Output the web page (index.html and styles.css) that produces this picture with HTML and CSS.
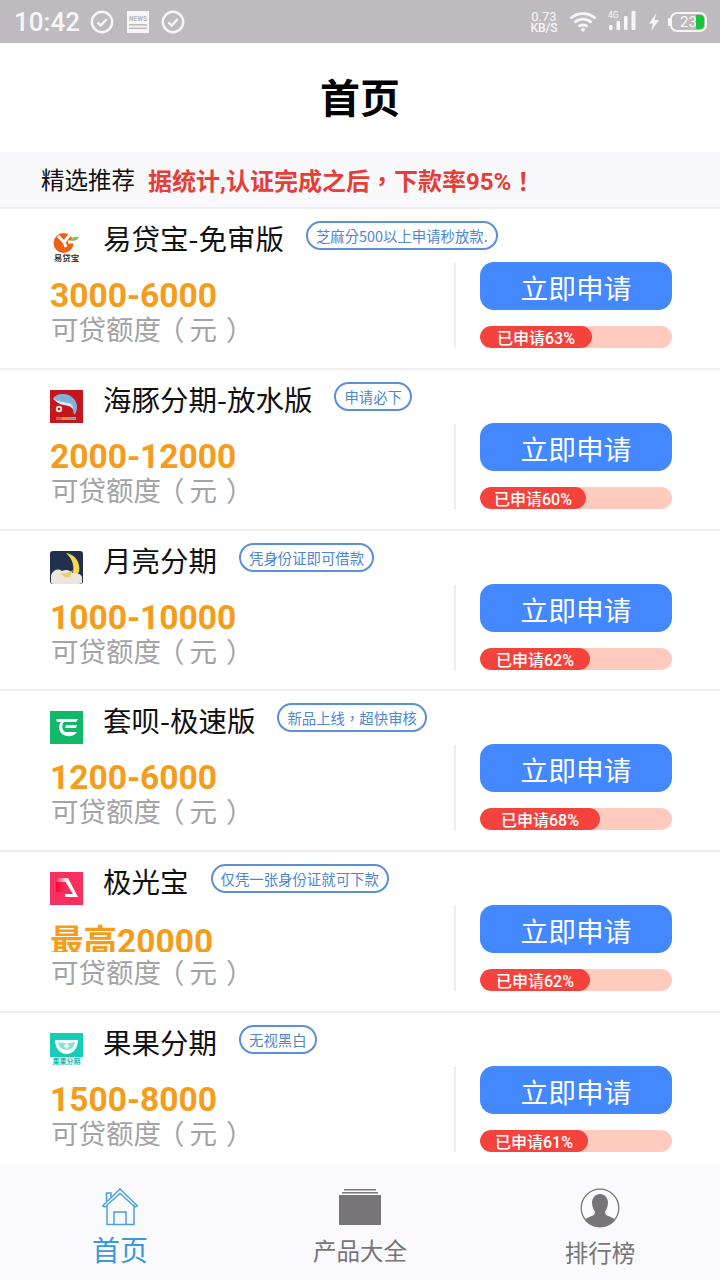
FILE: index.html
```html
<!DOCTYPE html>
<html>
<head>
    <title>首页</title>
    <link rel="stylesheet" href="styles.css">
</head>
<body>
    <div class="phone">
        <div class="statusBar">
            <span class="clock">10:42</span>
            <svg class="sIcon" width="24" height="24" viewBox="0 0 24 24"><circle cx="12" cy="12" r="10.2" fill="none" stroke="#f6f6f6" stroke-width="2.4"/><path d="M7.500 12.300l3.200 3.200 6-6.500" fill="none" stroke="#f6f6f6" stroke-width="2.400"/></svg>
            <svg class="sIcon newsIcon" width="22" height="22" viewBox="0 0 22 22"><rect width="22" height="22" fill="#f6f6f6"/><text x="11" y="9.500" font-size="6.500" font-weight="700" text-anchor="middle" fill="#b5b5b5" font-family="Roboto">NEWS</text><rect x="2" y="13" width="18" height="1.600" fill="#bdbbbe"/><rect x="2" y="16.500" width="18" height="1.600" fill="#bdbbbe"/></svg>
            <svg class="sIcon" width="24" height="24" viewBox="0 0 24 24"><circle cx="12" cy="12" r="10.200" fill="none" stroke="#f6f6f6" stroke-width="2.400"/><path d="M7.500 12.300l3.200 3.200 6-6.500" fill="none" stroke="#f6f6f6" stroke-width="2.400"/></svg>
            <div class="statusRight">
                <div class="speed"><span>0.73</span><span class="speedUnit">KB/S</span></div>
                <svg class="wifi" width="28" height="22" viewBox="0 0 28 22"><path d="M1.500 7.500C8.500 1 19.500 1 26.500 7.500M5.500 11.500C10.500 7 17.500 7 22.500 11.500M9.500 15.500C12 13.500 16 13.500 18.500 15.500" fill="none" stroke="#f6f6f6" stroke-width="2.800"/><path d="M11.500 18.500L14 16.500L16.500 18.500L14 21Z" fill="#f6f6f6"/></svg>
                <svg class="signal" width="28" height="21" viewBox="0 0 28 21"><text x="0" y="7.500" font-size="8.500" fill="#f6f6f6" font-family="Roboto">4G</text><rect x="1" y="15" width="3.500" height="5" rx="1.200" fill="#f6f6f6"/><rect x="8.500" y="11" width="3.500" height="9" rx="1" fill="#f6f6f6"/><rect x="16" y="6" width="3.500" height="14" rx="1" fill="#f6f6f6"/><rect x="23.500" y="1" width="4" height="19" rx="1" fill="#f6f6f6"/></svg>
                <svg class="bolt" width="12" height="18" viewBox="0 0 12 18"><path d="M8.500 0L1 10.500h4L3 18l8-11H6.500z" fill="#f6f6f6"/></svg>
                <div class="battery"><span>23</span><i></i></div>
            </div>
        </div>

        <div class="titleBar">首页</div>

        <div class="banner">
            <span class="bannerLabel">精选推荐</span>
            <span class="bannerNotice">据统计,认证完成之后，下款率95%！</span>
        </div>

        <div class="list">
            <div class="row">
                <div class="rowLeft">
                    <div class="rowHead">
                        <svg class="appIcon" viewBox="0 0 33 33"><circle cx="13.500" cy="14" r="10" fill="#ee5f16"/><path d="M8 7l6 6 2 5M22 3l-7 9M25 13l-7 0" fill="none" stroke="#fff" stroke-width="3"/><path d="M20 11c2-3 6-4 9-3-1 3-5 5-9 3z" fill="#8cbf4a"/><text x="16.500" y="31.500" font-size="8.500" text-anchor="middle" font-family="Noto Sans CJK SC" font-weight="500" fill="#222">易贷宝</text></svg>
                        <span class="name">易贷宝-免审版</span>
                        <span class="tag">芝麻分500以上申请秒放款.</span>
                    </div>
                    <div class="amount">3000-6000</div>
                    <div class="amountLabel">可贷额度<span class="parenOpen">（</span>元<span class="parenClose">）</span></div>
                </div>
                <div class="rowRight">
                    <div class="applyBtn">立即申请</div>
                    <div class="progress"><div class="progressFill" style="width: 112px">已申请63%</div></div>
                </div>
            </div>

            <div class="row">
                <div class="rowLeft">
                    <div class="rowHead">
                        <svg class="appIcon" viewBox="0 0 33 33"><rect width="33" height="33" fill="#c5161d"/><path d="M3 9c1-3 5-5 10-5 8 0 14 6 14 13 0 3-1 6-3 8l-1-5c-1-4-3-6-6-7-5 0-10 0-14-4z" fill="#7fb2dc"/><path d="M4 9c5 3 10 3 15 4 3 1 4 3 4 6-3-3-6-4-10-4-4-1-7-3-9-6z" fill="#dbe9f3"/><circle cx="9" cy="19" r="3.200" fill="#f3e6d8"/><circle cx="9" cy="19" r="1.300" fill="#c5161d"/><rect x="6" y="27" width="6" height="3" fill="#c9577a"/><rect x="12" y="27" width="7" height="3" fill="#d99a3c"/><rect x="19" y="27" width="7" height="3" fill="#7aa6c8"/></svg>
                        <span class="name">海豚分期-放水版</span>
                        <span class="tag">申请必下</span>
                    </div>
                    <div class="amount">2000-12000</div>
                    <div class="amountLabel">可贷额度<span class="parenOpen">（</span>元<span class="parenClose">）</span></div>
                </div>
                <div class="rowRight">
                    <div class="applyBtn">立即申请</div>
                    <div class="progress"><div class="progressFill" style="width: 106px">已申请60%</div></div>
                </div>
            </div>

            <div class="row">
                <div class="rowLeft">
                    <div class="rowHead">
                        <svg class="appIcon" viewBox="0 0 33 33"><rect width="33" height="33" rx="3" fill="#22304f"/><path d="M16 2c9 1 15 10 13 19-1 2-3 3-7 3 3-7 1-16-6-22z" fill="#f6d64f"/><path d="M1 24c2-5 7-7 11-4 4-2 8-1 10 2 4-1 9 1 10 4v5c0 1-1 2-3 2H4c-2 0-3-1-3-2z" fill="#ece7dc"/><path d="M10 22c5 1 9 0 13-3l-3 7c-3 1-7 0-10-4z" fill="#e9cf6a"/></svg>
                        <span class="name">月亮分期</span>
                        <span class="tag">凭身份证即可借款</span>
                    </div>
                    <div class="amount">1000-10000</div>
                    <div class="amountLabel">可贷额度<span class="parenOpen">（</span>元<span class="parenClose">）</span></div>
                </div>
                <div class="rowRight">
                    <div class="applyBtn">立即申请</div>
                    <div class="progress"><div class="progressFill" style="width: 110px">已申请62%</div></div>
                </div>
            </div>

            <div class="row">
                <div class="rowLeft">
                    <div class="rowHead">
                        <svg class="appIcon" viewBox="0 0 33 33"><rect width="33" height="33" fill="#10b868"/><path d="M6 8h22l-2 3H14c-3 3-2 9 2 10h11c-2 3-6 5-10 4C9 24 7 15 11 11H7z" fill="#fff"/><path d="M16 14h11l-1 3H15z" fill="#fff"/></svg>
                        <span class="name">套呗-极速版</span>
                        <span class="tag">新品上线，超快审核</span>
                    </div>
                    <div class="amount">1200-6000</div>
                    <div class="amountLabel">可贷额度<span class="parenOpen">（</span>元<span class="parenClose">）</span></div>
                </div>
                <div class="rowRight">
                    <div class="applyBtn">立即申请</div>
                    <div class="progress"><div class="progressFill" style="width: 120px">已申请68%</div></div>
                </div>
            </div>

            <div class="row">
                <div class="rowLeft">
                    <div class="rowHead">
                        <svg class="appIcon" viewBox="0 0 33 33"><defs><linearGradient id="pinkBar" x1="0" y1="0" x2="1" y2="0"><stop offset="0" stop-color="#f7305f"/><stop offset="1" stop-color="#fff"/></linearGradient><linearGradient id="redBlock" x1="0" y1="0" x2="1" y2="0"><stop offset="0" stop-color="#ee0a30"/><stop offset="1" stop-color="#f7305f"/></linearGradient></defs><rect width="33" height="33" fill="#f7305f"/><rect x="6" y="10" width="10" height="10" fill="url(#redBlock)"/><rect x="6" y="6" width="12" height="4" fill="url(#pinkBar)"/><path d="M18 6l10 19H15v-3h8L15.500 10z" fill="#fff"/></svg>
                        <span class="name">极光宝</span>
                        <span class="tag">仅凭一张身份证就可下款</span>
                    </div>
                    <div class="amount amountClipped">最高20000</div>
                    <div class="amountLabel">可贷额度<span class="parenOpen">（</span>元<span class="parenClose">）</span></div>
                </div>
                <div class="rowRight">
                    <div class="applyBtn">立即申请</div>
                    <div class="progress"><div class="progressFill" style="width: 110px">已申请62%</div></div>
                </div>
            </div>

            <div class="row">
                <div class="rowLeft">
                    <div class="rowHead">
                        <svg class="appIcon" viewBox="0 0 33 33"><rect width="33" height="24" fill="#18cdb8"/><path d="M5 7c0 8 5 14 11.500 14S28 15 28 7" fill="#fff"/><path d="M8 9c5 1.500 12 1.500 17 0-1 5-4 8-8.500 8S9 14 8 9z" fill="#7fe6da"/><path d="M15.500 10.500h2v1.500h1.500v2h-1.500v1.500h-2V14H14v-2h1.500z" fill="#fff"/><text x="16.500" y="31" font-size="7" font-weight="700" text-anchor="middle" font-family="Noto Sans CJK SC" fill="#18b8a8">果果分期</text></svg>
                        <span class="name">果果分期</span>
                        <span class="tag">无视黑白</span>
                    </div>
                    <div class="amount">1500-8000</div>
                    <div class="amountLabel">可贷额度<span class="parenOpen">（</span>元<span class="parenClose">）</span></div>
                </div>
                <div class="rowRight">
                    <div class="applyBtn">立即申请</div>
                    <div class="progress"><div class="progressFill" style="width: 108px">已申请61%</div></div>
                </div>
            </div>
        </div>

        <div class="tabBar">
            <div class="tab tabActive">
                <svg class="tabIcon" width="36" height="38" viewBox="0 0 36 38"><path d="M18 1L0.500 18l2.500 1L18 5.500 33 19l2.500-1zM5 16.500V36.500h27V16.500M12 36.500V24h12v12.500M4.500 13V5h4.500v4" fill="none" stroke="#4aa3df" stroke-width="1.500"/></svg>
                <span class="tabLabel">首页</span>
            </div>
            <div class="tab">
                <svg class="tabIcon" width="42" height="38" viewBox="0 0 42 38"><rect x="5" y="1" width="32" height="1.500" fill="#77757a"/><rect x="3" y="4" width="36" height="1.500" fill="#77757a"/><rect x="0" y="7" width="42" height="30" fill="#77757a"/></svg>
                <span class="tabLabel">产品大全</span>
            </div>
            <div class="tab">
                <svg class="tabIcon" width="40" height="40" viewBox="0 0 40 40"><circle cx="20" cy="20" r="18.800" fill="none" stroke="#77757a" stroke-width="1.300"/><path d="M20 6c5 0 8 4 8 9 0 4-2 7-3 9 0 2 1 3 3 4 3 1 6 2 7 4-3 4-9 7-15 7S8 36 5 32c1-2 4-3 7-4 2-1 3-2 3-4-1-2-3-5-3-9 0-5 3-9 8-9z" fill="#77757a"/></svg>
                <span class="tabLabel">排行榜</span>
            </div>
        </div>
    </div>
</body>
</html>
```

FILE: styles.css
```css
* {
    box-sizing: border-box;
}

body {
    margin: 0;
    padding: 0;
    background-color: #fff;
    font-family: "Noto Sans CJK SC", Roboto, sans-serif;
}

.phone {
    width: 720px;
    height: 1280px;
    display: flex;
    flex-direction: column;
    overflow: hidden;
}

/* status bar */
.statusBar {
    height: 43px;
    flex: none;
    display: flex;
    align-items: center;
    padding-left: 14px;
    background-color: #bdbbbe;
    color: #f6f6f6;
}

.clock {
    font-family: Roboto, sans-serif;
    font-size: 26px;
    font-weight: 500;
    margin-right: 10px;
}

.sIcon {
    margin-right: 13px;
}

.newsIcon {
    margin-right: 12px;
}

.statusRight {
    margin-left: auto;
    display: flex;
    align-items: center;
    padding-right: 13px;
}

.speed {
    display: flex;
    flex-direction: column;
    align-items: center;
    width: 28px;
    font-family: Roboto, sans-serif;
    font-size: 13px;
    line-height: 12px;
    margin-right: 11px;
}

.speedUnit {
    font-size: 12px;
    font-weight: 500;
    line-height: 10px;
}

.wifi {
    margin-right: 11px;
}

.signal {
    margin-right: 12px;
    margin-bottom: 3px;
}

.bolt {
    margin-right: 8px;
}

.battery {
    width: 37px;
    height: 20px;
    margin-left: 2px;
    border: 2px solid #f6f6f6;
    border-radius: 7px;
    position: relative;
    font-family: Roboto, sans-serif;
    font-size: 15px;
    line-height: 16px;
    padding-left: 8px;
}

.battery::before {
    content: "";
    position: absolute;
    top: 4px;
    left: -4px;
    width: 2px;
    height: 8px;
    background-color: #f6f6f6;
}

.battery i {
    position: absolute;
    top: 1px;
    right: 1px;
    width: 8px;
    height: 14px;
    border-radius: 0 4px 4px 0;
    background-color: #18c43a;
}

/* header */
.titleBar {
    height: 109px;
    flex: none;
    display: flex;
    align-items: center;
    justify-content: center;
    padding-bottom: 4px;
    font-size: 40px;
    font-weight: 700;
    color: #000;
    background-color: #fff;
}

.banner {
    height: 57px;
    flex: none;
    display: flex;
    align-items: center;
    padding-left: 41px;
    padding-bottom: 1px;
    background-color: #f9f8fb;
    border-bottom: 2px solid #eeeef0;
}

.bannerLabel {
    font-size: 23.5px;
    color: #111;
    margin-right: 13px;
}

.bannerNotice {
    font-family: Roboto, "Noto Sans CJK TC", sans-serif;
    font-size: 24px;
    font-weight: 700;
    color: #e53d38;
}

/* list */
.list {
    flex: 1;
    min-height: 0;
    overflow: hidden;
}

.row {
    height: 160.75px;
    display: flex;
    padding-left: 50px;
    background-color: #fff;
    border-bottom: 2px solid #f0f0f2;
}

.rowLeft {
    width: 404px;
    flex: none;
}

.rowHead {
    height: 70px;
    display: flex;
    align-items: flex-start;
}

.appIcon {
    width: 33px;
    height: 33px;
    flex: none;
    margin-top: 20px;
    margin-right: 20px;
}

.name {
    font-size: 28.5px;
    line-height: 40px;
    margin-top: 9px;
    color: #111;
    white-space: nowrap;
}

.tag {
    height: 29px;
    margin-top: 12px;
    margin-left: 22px;
    padding: 0 8px;
    border: 2px solid #5b8fd8;
    border-radius: 15px;
    font-family: "Noto Sans CJK TC", sans-serif;
    font-size: 14.4px;
    line-height: 26px;
    color: #4d86d2;
    white-space: nowrap;
}

.amount {
    height: 34px;
    font-family: Roboto, "Noto Sans CJK SC", sans-serif;
    font-size: 33.5px;
    font-weight: 700;
    line-height: 34px;
    color: #f59c1a;
}

/* this one is cut off by its box in the real app too */
.amountClipped {
    height: 30px;
    margin-bottom: 4px;
    overflow: hidden;
    line-height: 40px;
}

.amountLabel {
    height: 30px;
    margin-left: 1px;
    font-size: 27.5px;
    line-height: 30px;
    color: #a3a3a5;
    white-space: nowrap;
}

.parenOpen {
    margin-left: -4px;
    margin-right: 5px;
}

.parenClose {
    margin-left: 9px;
}

.rowRight {
    width: 218px;
    height: 85px;
    flex: none;
    margin-top: 54px;
    padding-left: 24px;
    border-left: 2px solid #eeeeee;
}

.applyBtn {
    width: 192px;
    height: 48px;
    margin-top: -1px;
    border-radius: 14px;
    background-color: #4488ff;
    color: #fff;
    font-size: 27.7px;
    line-height: 50px;
    text-align: center;
}

.progress {
    width: 192px;
    height: 22px;
    margin-top: 16px;
    border-radius: 11px;
    background-color: #ffcbbf;
    overflow: hidden;
}

.progressFill {
    height: 22px;
    border-radius: 11px;
    background-color: #f4433c;
    color: #fff;
    font-family: Roboto, "Noto Sans CJK SC", sans-serif;
    font-size: 16px;
    font-weight: 500;
    line-height: 25px;
    text-align: center;
    white-space: nowrap;
}

/* bottom tabs */
.tabBar {
    height: 116px;
    flex: none;
    display: flex;
    background-color: #faf9fc;
}

.tab {
    flex: 1;
    height: 100%;
    display: flex;
    flex-direction: column;
    align-items: center;
    padding-top: 24px;
}

.tabIcon {
    flex: none;
}

.tabLabel {
    font-size: 23.5px;
    line-height: 30px;
    margin-top: 9px;
    color: #77757a;
}

.tabActive .tabLabel {
    font-size: 28px;
    line-height: 36px;
    margin-top: 5px;
    color: #3b9ad9;
}
```
